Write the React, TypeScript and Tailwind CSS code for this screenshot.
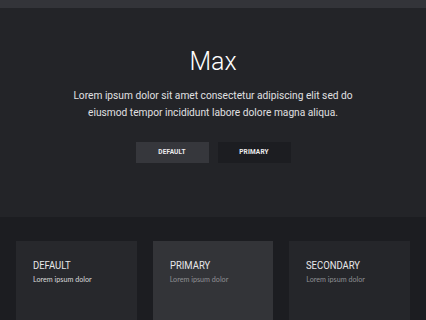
export default function App() {
  return (
    <main className="min-h-screen bg-[#1c1d21] text-white font-['Roboto',sans-serif]">
      <div className="h-2 bg-[#333439]" />

      <section className="bg-[#232428] flex flex-col items-center text-center pt-[37px] pb-[54px]">
        <h1 className="text-[25px] font-light leading-[34px]">Max</h1>
        <p className="mt-[8px] text-[10.2px] leading-[17px] text-[#e0e0e2]">
          Lorem ipsum dolor sit amet consectetur adipiscing elit sed do
          <br />
          eiusmod tempor incididunt labore dolore magna aliqua.
        </p>
        <div className="mt-[21px] flex gap-[9px]">
          <button className="w-[73px] h-[21px] bg-[#36373c] text-[6.5px] font-bold tracking-wide text-[#ececee]">
            DEFAULT
          </button>
          <button className="w-[73px] h-[21px] bg-[#1c1d21] text-[6.5px] font-bold tracking-wide text-[#ececee]">
            PRIMARY
          </button>
        </div>
      </section>

      <section className="grid grid-cols-3 gap-4 px-4 pt-6">
        <div className="bg-[#27282c] h-[80px] px-[17px] pt-[18px]">
          <h3 className="origin-left scale-x-[0.86] text-[11px] leading-[14px] text-[#e8e8ea]">DEFAULT</h3>
          <p className="mt-[2px] text-[7.2px] text-[#d8d8da] font-['Lato',sans-serif]">Lorem ipsum dolor</p>
        </div>
        <div className="bg-[#333438] h-[80px] px-[17px] pt-[18px]">
          <h3 className="origin-left scale-x-[0.86] text-[11px] leading-[14px] text-[#e8e8ea]">PRIMARY</h3>
          <p className="mt-[2px] text-[7.2px] text-[#8e8f93] font-['Lato',sans-serif]">Lorem ipsum dolor</p>
        </div>
        <div className="bg-[#25262a] h-[80px] px-[17px] pt-[18px]">
          <h3 className="origin-left scale-x-[0.86] text-[11px] leading-[14px] text-[#e8e8ea]">SECONDARY</h3>
          <p className="mt-[2px] text-[7.2px] text-[#8e8f93] font-['Lato',sans-serif]">Lorem ipsum dolor</p>
        </div>
      </section>
    </main>
  )
}
